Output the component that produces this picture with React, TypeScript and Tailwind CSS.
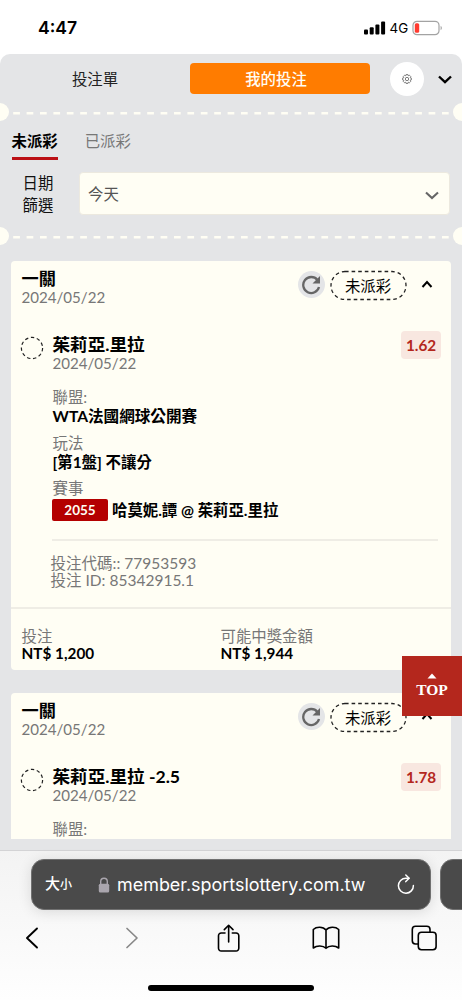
import type { ReactNode } from "react";

type Bet = {
  id: string;
  title: string;
  date: string;
  pick: string;
  odds: string;
  details?: {
    league: string;
    market: string;
    matchId: string;
    match: string;
    code: string;
    stake: string;
    payout: string;
  };
};

const bets: Bet[] = [
  {
    id: "85342915.1",
    title: "一關",
    date: "2024/05/22",
    pick: "茱莉亞.里拉",
    odds: "1.62",
    details: {
      league: "WTA法國網球公開賽",
      market: "[第1盤] 不讓分",
      matchId: "2055",
      match: "哈莫妮.譚 @ 茱莉亞.里拉",
      code: "77953593",
      stake: "NT$ 1,200",
      payout: "NT$ 1,944",
    },
  },
  {
    id: "next",
    title: "一關",
    date: "2024/05/22",
    pick: "茱莉亞.里拉 -2.5",
    odds: "1.78",
  },
];

export default function App() {
  return (
    <div className="relative flex h-[1000px] w-[462px] flex-col overflow-hidden bg-white font-['Lato','Noto_Sans_CJK_TC',sans-serif] text-[15.4px] leading-[18px] text-black">
      <StatusBar />
      <main className="flex h-[796px] shrink-0 flex-col overflow-hidden rounded-t-[10px] bg-[#e4e5e7]">
        <Header />
        <Perforation />
        <Filters />
        <Perforation />
        <div className="mx-[11px] mt-4 flex h-[578px] shrink-0 flex-col gap-[23px] overflow-hidden">
          {bets.map((bet) => (
            <BetCard key={bet.id} bet={bet} />
          ))}
        </div>
      </main>
      <BrowserBar />

      <button className="absolute top-[656px] right-0 flex h-[60px] w-[60px] flex-col items-center bg-[#b4271d] text-white">
        <svg className="mt-[17px]" width="10" height="6" viewBox="0 0 10 6" fill="currentColor">
          <path d="M5 0.5 9.5 5.5H0.5z" />
        </svg>
        <span className="mt-0.5 font-['Liberation_Serif',serif] text-[15.5px] leading-[18px] font-bold">
          TOP
        </span>
      </button>
    </div>
  );
}

function StatusBar() {
  return (
    <div className="flex h-[54px] shrink-0 items-center pt-[2px] pl-[38px] font-['Inter',sans-serif]">
      <span className="w-[326px] text-[17.6px] leading-[22px] font-semibold">4:47</span>
      <svg width="22" height="14" viewBox="0 0 22 14">
        <rect x="0" y="8.5" width="4" height="5" rx="1" />
        <rect x="5.7" y="6.2" width="4" height="7.3" rx="1" />
        <rect x="11.4" y="3.5" width="4" height="10" rx="1" />
        <rect x="17.1" y="0.5" width="4" height="13" rx="1" />
      </svg>
      <span className="ml-[3.5px] w-[20px] text-[13.4px] leading-4">4G</span>
      <svg className="ml-[2px]" width="31" height="16" viewBox="0 0 31 16" fill="none">
        <rect x="1" y="1.3" width="26" height="13.4" rx="4" stroke="#a3a3a3" strokeWidth="1.2" />
        <rect x="2.8" y="3.2" width="4.4" height="9.6" rx="1.6" fill="#ff3b30" />
        <path d="M28.6 5.8c1.7.7 1.7 3.7 0 4.4z" fill="#a3a3a3" />
      </svg>
    </div>
  );
}

function Header() {
  return (
    <header className="flex h-[49px] shrink-0 items-center">
      <button className="w-[190px] text-center text-[#222]">投注單</button>
      <button className="h-[31px] w-[180px] rounded bg-[#ff7c00] pr-2 text-center font-medium text-[#fffdf4]">
        我的投注
      </button>
      <button className="ml-5 flex h-[34px] w-[34px] items-center justify-center rounded-full bg-white">
        <Gear />
      </button>
      <svg className="mt-[2px] ml-[14px]" width="14" height="9" viewBox="0 0 14 9" fill="none" stroke="#000" strokeWidth="2.4">
        <path d="M1 1.5 7 7.2l6-5.7" />
      </svg>
    </header>
  );
}

function Gear() {
  return (
    <svg width="10" height="10" viewBox="0 0 24 24" fill="none" stroke="#666" strokeWidth="2">
      <path d="M9.6 1.5h4.8l.7 2.8 2.5-1.5 3.4 3.4-1.5 2.5 2.8.8v4.9l-2.8.8 1.5 2.5-3.4 3.4-2.5-1.5-.7 2.9H9.6l-.7-2.9-2.5 1.5L3 17.7l1.5-2.5-2.9-.8V9.5l2.9-.8L3 6.2l3.4-3.4 2.5 1.5z" />
      <circle cx="12" cy="12" r="4" />
    </svg>
  );
}

// Ticket edge: punched half circles with a dashed tear line between them
function Perforation() {
  return (
    <svg className="block h-[18px] w-full shrink-0" viewBox="0 0 462 18">
      <circle cx="0" cy="9" r="9" fill="#fffef4" />
      <circle cx="462" cy="9" r="9" fill="#fffef4" />
      <path d="M13.2 10.2H449" stroke="#fffef4" strokeWidth="2.4" strokeDasharray="6.7 6.7" />
    </svg>
  );
}

function Filters() {
  return (
    <section className="flex h-[106px] shrink-0 flex-col">
      <div className="flex h-[39px] shrink-0 gap-[27px] pl-[11.5px]">
        <button className="flex h-[39px] flex-col items-start border-b-3 border-[#bb1015] pt-[11px] font-bold">
          未派彩
        </button>
        <button className="flex h-[39px] flex-col pt-[11px] text-[#777]">已派彩</button>
      </div>
      <div className="mt-3 flex">
        <div className="w-[78.5px] pl-[22.5px] leading-[22px] text-[#111]">
          日期
          <br />
          篩選
        </div>
        <div className="flex h-[43px] w-[371px] items-center justify-between rounded border border-[#ece9df] bg-[#fffef4] pr-[9.5px] pl-[8.5px] text-[#555]">
          今天
          <svg className="mt-[3px]" width="14" height="9" viewBox="0 0 14 9" fill="none" stroke="#666" strokeWidth="2.1">
            <path d="M1 1.5 7 7l6-5.5" />
          </svg>
        </div>
      </div>
    </section>
  );
}

function BetCard({ bet }: { bet: Bet }) {
  const { details } = bet;

  return (
    <article className="h-[409px] shrink-0 rounded bg-[#fffef4]">
      <div className="flex h-[70px] pt-[9px] pl-[10.5px]">
        <div className="w-[276px]">
          <h2 className="text-[17.2px] leading-[18px] font-bold">{bet.title}</h2>
          <p className="text-[15.1px] text-[#777]">{bet.date}</p>
        </div>
        <button className="mt-[1px] flex h-[27px] w-[27px] items-center justify-center rounded-full bg-[#e4e5e7]">
          <Reload />
        </button>
        <div className="relative ml-[5px] flex h-[31px] w-[77px] items-center justify-center">
          <svg className="absolute inset-0" width="77" height="31" viewBox="0 0 77 31" fill="none">
            <rect x="1" y="1.5" width="75" height="28" rx="14" stroke="#222" strokeWidth="1.3" strokeDasharray="3.6 3" />
          </svg>
          未派彩
        </div>
        <svg className="mt-[10px] ml-[14px]" width="12" height="8" viewBox="0 0 12 8" fill="none" stroke="#000" strokeWidth="2">
          <path d="M1.500 7 6 2l4.500 5" />
        </svg>
      </div>

      <div className="flex">
        <svg className="mt-[4.5px] ml-[9px]" width="24" height="24" viewBox="0 0 24 24" fill="none">
          <circle cx="12" cy="12" r="10.6" stroke="#222" strokeWidth="1.2" strokeDasharray="3.4 2.66" />
        </svg>
        <div className="ml-[8.5px] w-[386px]">
          <div className="flex h-[57px] justify-between">
            <div className="pt-[5px]">
              <h3 className="text-[17.6px] leading-[18px] font-bold">{bet.pick}</h3>
              <p className="text-[15.1px] text-[#777]">{bet.date}</p>
            </div>
            <span className="mr-[-2.5px] h-[28px] w-[40px] rounded bg-[#f8e7e0] text-center text-[15.3px] leading-[28px] font-bold text-[#b4271d]">
              {bet.odds}
            </span>
          </div>
          <Field label="聯盟:">
            <span className="text-[15.6px]">{details?.league}</span>
          </Field>
          {details && (
            <>
              <Field label="玩法">{details.market}</Field>
              <Field label="賽事">
                <span className="mt-[1px] mr-1 -ml-[0.5px] h-[22px] w-[56px] rounded-xs bg-[#b40000] text-center text-[13.5px] leading-[22px] text-[#fffef4]">
                  {details.matchId}
                </span>
                <span className="leading-6">{details.match}</span>
              </Field>
            </>
          )}
        </div>
      </div>

      {details && (
        <>
          <div className="mt-[9px] ml-[41px] h-[68px] w-[386px] border-t-2 border-[#efede5] pt-[14px] text-[15.5px] leading-[17px] text-[#777]">
            <p className="-ml-[1.5px]">投注代碼:: {details.code}</p>
            <p className="-ml-[1.5px]">投注 ID: {bet.id}</p>
          </div>

          <div className="flex border-t-2 border-[#efede5] pt-[19px] pl-[10.5px]">
            <Amount label="投注">{details.stake}</Amount>
            <Amount label="可能中獎金額">{details.payout}</Amount>
          </div>
        </>
      )}
    </article>
  );
}

function Field({ label, children }: { label: string; children: ReactNode }) {
  return (
    <div className="mb-[7.5px] whitespace-nowrap">
      <p className="leading-[19px] text-[#777]">{label}</p>
      <div className="flex leading-[19px] font-bold">{children}</div>
    </div>
  );
}

function Amount({ label, children }: { label: string; children: ReactNode }) {
  return (
    <div className="w-[199px] leading-[17px]">
      <p className="text-[#777]">{label}</p>
      <p className="text-[15.3px] font-bold">{children}</p>
    </div>
  );
}

function Reload() {
  return (
    <svg width="20" height="20" viewBox="0 0 20 20" fill="none">
      <path d="M16.4 4.9A8 8 0 1 0 18 12" stroke="#666" strokeWidth="2.3" />
      <path d="M19 1v7.5h-7.5z" fill="#666" />
    </svg>
  );
}

function BrowserBar() {
  return (
    <footer className="flex h-[150px] shrink-0 flex-col border-t border-[#d3d3d5] bg-linear-to-b from-[#f3f3f3] to-[#fefefe] font-['Inter','Noto_Sans_CJK_TC',sans-serif]">
      <div className="mt-2 flex h-[51px] gap-[9px] pl-[31px]">
        <div className="flex h-[51px] w-[400px] shrink-0 items-center rounded-[13px] border border-[#707070] bg-[#4a4a4a] pl-[13px] text-white shadow-[0_2px_14px_rgba(0,0,0,0.12)]">
          <span className="flex w-[53px] items-baseline text-[15px] font-medium">
            大<span className="text-[12px]">小</span>
          </span>
          <svg width="12" height="16" viewBox="0 0 12 16" fill="none">
            <path d="M2.7 8V4.5a3.3 3.3 0 0 1 6.6 0V8" stroke="#aaa6ae" strokeWidth="1.4" />
            <rect x="0.8" y="6.8" width="10.4" height="8.7" rx="1.5" fill="#aaa6ae" />
          </svg>
          <span className="ml-[7px] w-[280px] text-[17.95px] leading-[22px]">
            member.sportslottery.com.tw
          </span>
          <svg width="18" height="22" viewBox="0 0 18 22" fill="none" stroke="#fff" strokeWidth="1.5" strokeLinecap="round" strokeLinejoin="round">
            <path d="M16.4 11.5a7.5 7.5 0 1 1-7.5-7.3h3" />
            <path d="m8.8 1 3.3 3.2-3.3 3.4" />
          </svg>
        </div>
        <div className="h-[51px] w-[60px] shrink-0 rounded-[13px] border border-[#707070] bg-[#4a4a4a]" />
      </div>

      <nav className="mt-[12px] flex h-[32px] items-center pl-[25px]">
        <svg width="14" height="22" viewBox="0 0 14 22" fill="none" stroke="#000" strokeWidth="1.9" strokeLinecap="round" strokeLinejoin="round">
          <path d="M12 1.5 2 11l10 9.5" />
        </svg>
        <svg className="ml-[86px]" width="14" height="22" viewBox="0 0 14 22" fill="none" stroke="#888" strokeWidth="1.7" strokeLinecap="round" strokeLinejoin="round">
          <path d="m2 1.5 10 9.5-10 9.5" />
        </svg>
        <svg className="ml-[78px]" width="24" height="28" viewBox="0 0 24 28" fill="none" stroke="#000" strokeWidth="1.6" strokeLinecap="round" strokeLinejoin="round">
          <path d="M8 9H4.200A2.700 2.700 0 0 0 1.500 11.700v12.600A2.700 2.700 0 0 0 4.200 27h14.900a2.700 2.700 0 0 0 2.700-2.700V11.700A2.700 2.700 0 0 0 19.100 9h-3.800" />
          <path d="M11.650 18V1.500M7.300 5.600l4.350-4.300L16 5.600" />
        </svg>
        <svg className="ml-[71px]" width="28" height="24" viewBox="0 0 28 24" fill="none" stroke="#000" strokeWidth="1.6" strokeLinejoin="round">
          <path d="M14 4C11 .4 4.500.4 1.300 3.500V22c3.500-2.700 9.700-2.700 12.700.3 3-3 9.200-3 12.700-.3V3.500C23.500.4 17 .4 14 4zM14 4v18.300" />
        </svg>
        <svg className="ml-[71px]" width="27" height="26" viewBox="0 0 27 26" fill="none" stroke="#000" strokeWidth="1.6">
          <path d="M7 19H4.500A3.200 3.200 0 0 1 1.300 15.800V4.500A3.200 3.200 0 0 1 4.500 1.300h11.300A3.200 3.200 0 0 1 19 4.500V7" />
          <rect x="7.3" y="7.2" width="17.8" height="17.5" rx="3.2" />
        </svg>
      </nav>

      <div className="mt-[31px] ml-[148px] h-[6px] w-[166px] shrink-0 rounded-full bg-black" />
    </footer>
  );
}
